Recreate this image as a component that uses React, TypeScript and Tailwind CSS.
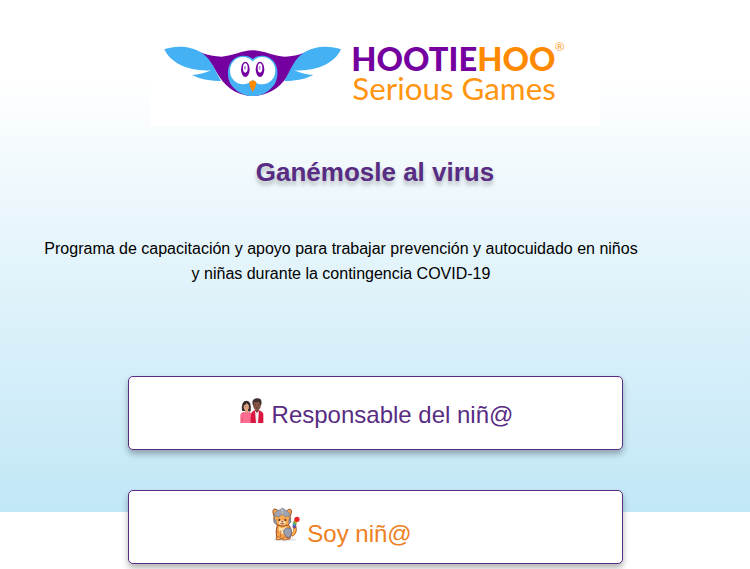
function Logo() {
  return (
    <svg viewBox="0 0 1350 378" className="block w-3/5 bg-white" role="img" aria-label="HootieHoo Serious Games">
      <g transform="translate(-30 0)">
        <path d="M180 157Q215 170 245 170C280 168 305 151 338 151S398 169 435 170Q465 170 496 157C470 175 457 205 440 232C415 270 375 288 338 288S262 268 238 230C222 205 210 178 180 157Z" fill="#7400a0" />
        <g id="wing">
          <path d="M73 148C105 136 150 136 185 158C215 178 226 213 243 243C215 243 183 239 156 225C176 224 196 219 214 211C150 216 91 190 73 148Z" fill="#43b1f3" />
        </g>
        <use href="#wing" transform="translate(676 0) scale(-1 1)" />
        <path d="M338 177C320 161 285 165 271 190C261 207 261 235 273 254C291 277 312 288 338 288S385 277 403 254C415 235 415 207 405 190C391 165 356 161 338 177Z" fill="#43b1f3" />
        <ellipse cx="309" cy="212" rx="39" ry="41" fill="#fff" />
        <ellipse cx="367" cy="212" rx="39" ry="41" fill="#fff" />
        <ellipse cx="316" cy="208" rx="13" ry="23" fill="#7400a0" />
        <ellipse cx="360" cy="208" rx="13" ry="23" fill="#7400a0" />
        <ellipse cx="316" cy="204" rx="7" ry="14" fill="#fff" />
        <ellipse cx="360" cy="204" rx="7" ry="14" fill="#fff" />
        <ellipse cx="315" cy="203" rx="3" ry="6" fill="#b98bd6" />
        <ellipse cx="359" cy="203" rx="3" ry="6" fill="#b98bd6" />
        <path d="M327 246Q338 237 349 246Q348 262 338 276Q328 262 327 246Z" fill="#ff8a00" />
        <text x="634" y="213" fontSize="98" fontWeight="900" className="font-['Lato',sans-serif]" fill="#7400a0">
          HOOTIE<tspan fill="#ff8a00">HOO</tspan>
        </text>
        <text x="1244" y="154" fontSize="36" className="font-['Lato',sans-serif]" fill="#ff9a30">®</text>
        <text x="637" y="299" fontSize="94" className="font-['Lato',sans-serif]" fill="#ff9510">Serious Games</text>
      </g>
    </svg>
  );
}

function CoupleIcon() {
  return (
    <svg viewBox="0 0 72 75" className="h-[25px] w-6 shrink-0" aria-hidden="true">
      <path d="M6 38Q3 9 19 8Q35 7 32 39Q29 43 24 39H10Z" fill="#35292b" />
      <path d="M15 31h9v15h-9z" fill="#dca07e" />
      <ellipse cx="19" cy="26" rx="8" ry="11" fill="#e0a583" />
      <path d="M8 24Q15 22 21 15Q23 21 31 24Q28 9 19 9T8 24Z" fill="#35292b" />
      <path d="M1 75V52Q2 43 12 41Q20 47 28 41Q36 44 37 52V75Z" fill="#fb6c8e" />
      <path d="M6 57v17M31 57v17" stroke="#d6486f" strokeWidth="2" />
      <path d="M45 31h12v16H45z" fill="#754a3a" />
      <ellipse cx="51" cy="21" rx="12" ry="16" fill="#875848" />
      <path d="M38 20Q34 2 51 1T64 20L61 22Q61 13 55 11Q47 14 42 12L41 22Z" fill="#40312d" />
      <path d="M33 75V49Q34 41 45 37L51 44L57 37Q69 41 70 49V75Z" fill="#da1641" />
      <path d="M45 38L51 45L57 38L54 75H48Z" fill="#f5f1f3" />
      <path d="M46 21h2m7 0h2" stroke="#291c1b" strokeWidth="3" />
      <path d="M47 29Q51 32 55 29" stroke="#4b251d" strokeWidth="2" fill="none" />
      <path d="M15 26h2m6 0h2" stroke="#3b2828" strokeWidth="2" />
    </svg>
  );
}

function CatIcon() {
  return (
    <svg viewBox="-3 0 90 105" className="h-[35px] w-[30px] shrink-0" aria-hidden="true">
      <ellipse cx="42" cy="98" rx="34" ry="5" fill="#e5e5e7" />
      <path d="M62 85Q74 78 72 64Q68 49 76 39" fill="none" stroke="#a95224" strokeWidth="10" />
      <path d="M63 84Q73 76 71 64" fill="none" stroke="#ffad45" strokeWidth="7" />
      <path d="M70 63L69 56" stroke="#7944a4" strokeWidth="9" />
      <path d="M69 56L70 50" stroke="#249bdb" strokeWidth="9" />
      <path d="M70 50L73 45" stroke="#6bbb43" strokeWidth="9" />
      <path d="M73 45L77 40" stroke="#ffc426" strokeWidth="9" />
      <circle cx="78" cy="37" r="8" fill="#e9272b" />
      <path d="M19 53Q12 74 18 96H56Q66 83 59 64L50 49Z" fill="#f8a348" stroke="#974d28" strokeWidth="3" />
      <path d="M24 59Q35 68 45 58Q46 78 35 82Q22 78 24 59Z" fill="#ffe1ac" />
      <path d="M9 28Q2 9 10 6Q19 5 24 15L45 14Q56 2 61 9Q62 22 57 29Q63 47 50 54Q33 62 15 51Q6 44 9 28Z" fill="#fca94d" stroke="#944e2a" strokeWidth="3" />
      <path d="M10 30Q9 12 25 9L35 3L43 9Q57 14 57 30L49 27L43 30L34 21L24 30L17 27Z" fill="#a2a5b1" stroke="#747784" strokeWidth="2" />
      <path d="M34 5V20" stroke="#c6c8d0" strokeWidth="3" />
      <path d="M11 34L8 46L16 52L15 38M55 33L60 45L54 51L53 37" fill="#999ca8" stroke="#747784" strokeWidth="2" />
      <path d="M23 42Q34 37 45 42L43 51Q34 57 25 51Z" fill="#ffe3b6" />
      <ellipse cx="25" cy="39" rx="3" ry="4" fill="#65382b" />
      <ellipse cx="43" cy="39" rx="3" ry="4" fill="#65382b" />
      <path d="M31 43H37L34 46ZM28 49Q34 54 40 49" fill="#a34530" stroke="#924530" strokeWidth="2" />
      <path d="M38 70Q49 58 59 66Q66 87 51 92Q38 86 38 70Z" fill="#9b9eae" stroke="#747588" strokeWidth="3" />
      <path d="M15 91Q24 86 29 94Q30 99 16 98ZM35 96Q38 87 50 92Q53 99 36 99Z" fill="#ffb45b" stroke="#984d28" strokeWidth="2" />
      <path d="M29 70V91M18 73L24 76" stroke="#b35e29" strokeWidth="2" />
    </svg>
  );
}

const buttonClass =
  "flex h-[74px] w-[66%] items-baseline justify-center rounded-[5px] border border-[#582c83] bg-white text-2xl shadow-[0_4px_6px_rgba(0,0,0,0.3)]";

export default function App() {
  return (
    <main className="min-h-screen bg-linear-to-b from-white from-15% via-[#e4f4fb] via-50% to-[#c1e7f7] bg-[length:100%_90vh] bg-no-repeat font-['Liberation_Sans',Arial,sans-serif]">
      <div className="flex flex-col items-center">
        <Logo />
        <h1 className="mt-7 text-[26px] leading-9 font-bold text-[#582c83] [text-shadow:0_4px_4px_rgba(0,0,0,0.25)]">
          Ganémosle al virus
        </h1>
        <div className="mt-[46px] flex w-full justify-center pr-17">
          <p className="max-w-[600px] text-center text-base leading-[25px] text-black">
            Programa de capacitación y apoyo para trabajar prevención y autocuidado en niños y niñas durante la contingencia COVID-19
          </p>
        </div>
        <div className="mt-[90px] flex w-full flex-col items-center gap-10">
          <button type="button" className={`${buttonClass} gap-2 pt-[21px] pl-[3px] text-[#582c83]`}>
            <CoupleIcon />
            <span>Responsable del niñ@</span>
          </button>
          <button type="button" className={`${buttonClass} gap-[7px] pt-4 pr-17 text-[#ee7f22]`}>
            <CatIcon />
            <span>Soy niñ@</span>
          </button>
        </div>
      </div>
    </main>
  );
}
